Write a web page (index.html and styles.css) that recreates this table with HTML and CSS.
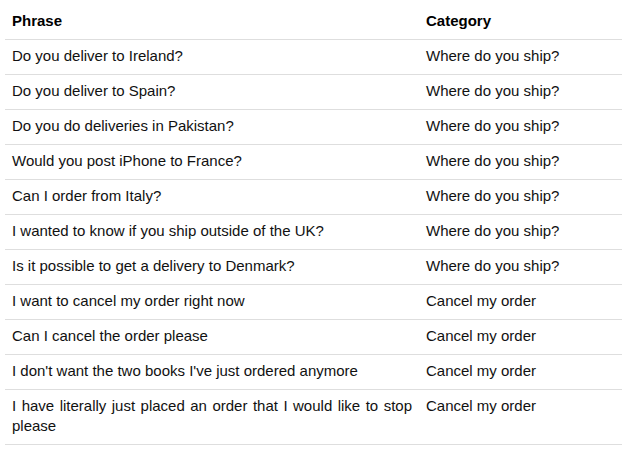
FILE: index.html
```html
<!DOCTYPE html>
<html>
<head>
<meta charset="utf-8">
<link rel="stylesheet" href="styles.css">
</head>
<body>
<table class="grid">
  <thead>
    <tr><th class="phrase">Phrase</th><th class="cat">Category</th></tr>
  </thead>
  <tbody>
    <tr><td class="phrase">Do you deliver to Ireland?</td><td class="cat">Where do you ship?</td></tr>
    <tr><td class="phrase">Do you deliver to Spain?</td><td class="cat">Where do you ship?</td></tr>
    <tr><td class="phrase">Do you do deliveries in Pakistan?</td><td class="cat">Where do you ship?</td></tr>
    <tr><td class="phrase">Would you post iPhone to France?</td><td class="cat">Where do you ship?</td></tr>
    <tr><td class="phrase">Can I order from Italy?</td><td class="cat">Where do you ship?</td></tr>
    <tr><td class="phrase">I wanted to know if you ship outside of the UK?</td><td class="cat">Where do you ship?</td></tr>
    <tr><td class="phrase">Is it possible to get a delivery to Denmark?</td><td class="cat">Where do you ship?</td></tr>
    <tr><td class="phrase">I want to cancel my order right now</td><td class="cat">Cancel my order</td></tr>
    <tr><td class="phrase">Can I cancel the order please</td><td class="cat">Cancel my order</td></tr>
    <tr><td class="phrase">I don't want the two books I've just ordered anymore</td><td class="cat">Cancel my order</td></tr>
    <tr><td class="phrase">I have literally just placed an order that I would like to stop please</td><td class="cat">Cancel my order</td></tr>
  </tbody>
</table>
</body>
</html>
```
FILE: styles.css
```css
html, body {
  margin: 0;
  padding: 0;
  background: #fff;
}
body {
  padding: 5px 5px;
  font-family: "Liberation Sans", Arial, sans-serif;
  font-size: 15px;
  line-height: 20px;
  color: #111;
}
.grid {
  width: 617px;
  border-collapse: collapse;
  table-layout: fixed;
}
.grid th, .grid td {
  padding: 6px 7px 8px;
  text-align: justify;
  vertical-align: top;
  border-bottom: 1px solid #dedede;
}
.grid th {
  font-weight: bold;
  text-align: left;
  color: #000;
}
.grid .phrase {
  width: 400px;
}
```
